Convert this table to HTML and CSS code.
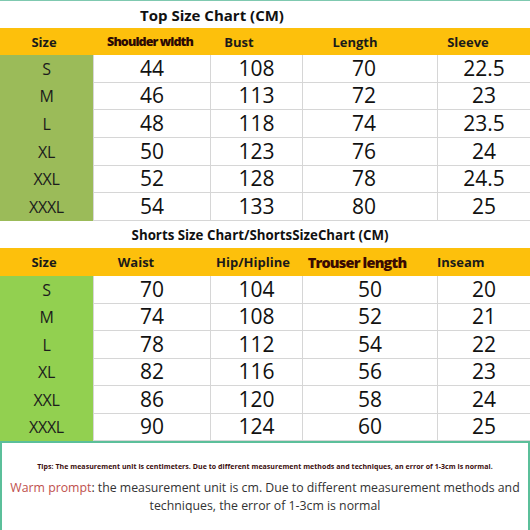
FILE: index.html
```html
<!DOCTYPE html>
<html lang="en">
  <head>
    <meta charset="utf-8">
    <title>Size Chart</title>
    <link rel="stylesheet" href="styles.css">
  </head>
  <body>
    <div class="sheet">
      <h2 class="chart-title title-top">Top Size Chart (CM)</h2>
      <div class="head">
        <span class="h-size">Size</span>
        <span class="heavy h-shoulder">Shoulder width</span>
        <span class="h-bust">Bust</span>
        <span class="h-length">Length</span>
        <span class="h-sleeve">Sleeve</span>
      </div>
      <div class="grid top">
        <span class="size">S</span><span class="num">44</span><span class="num">108</span><span class="num">70</span><span class="num">22.5</span>
        <span class="size">M</span><span class="num">46</span><span class="num">113</span><span class="num">72</span><span class="num">23</span>
        <span class="size">L</span><span class="num">48</span><span class="num">118</span><span class="num">74</span><span class="num">23.5</span>
        <span class="size">XL</span><span class="num">50</span><span class="num">123</span><span class="num">76</span><span class="num">24</span>
        <span class="size">XXL</span><span class="num">52</span><span class="num">128</span><span class="num">78</span><span class="num">24.5</span>
        <span class="size">XXXL</span><span class="num">54</span><span class="num">133</span><span class="num">80</span><span class="num">25</span>
      </div>

      <h2 class="chart-title title-shorts">Shorts Size Chart/ShortsSizeChart (CM)</h2>
      <div class="head head-shorts">
        <span class="h-size">Size</span>
        <span class="h-waist">Waist</span>
        <span class="h-hip">Hip/Hipline</span>
        <span class="heavy h-trouser">Trouser length</span>
        <span class="h-inseam">Inseam</span>
      </div>
      <div class="grid shorts">
        <span class="size">S</span><span class="num">70</span><span class="num">104</span><span class="num">50</span><span class="num">20</span>
        <span class="size">M</span><span class="num">74</span><span class="num">108</span><span class="num">52</span><span class="num">21</span>
        <span class="size">L</span><span class="num">78</span><span class="num">112</span><span class="num">54</span><span class="num">22</span>
        <span class="size">XL</span><span class="num">82</span><span class="num">116</span><span class="num">56</span><span class="num">23</span>
        <span class="size">XXL</span><span class="num">86</span><span class="num">120</span><span class="num">58</span><span class="num">24</span>
        <span class="size">XXXL</span><span class="num">90</span><span class="num">124</span><span class="num">60</span><span class="num">25</span>
      </div>

      <div class="note">
        <p class="tips">Tips: The measurement unit is centimeters. Due to different measurement methods and techniques, an error of 1-3cm is normal.</p>
        <p class="warm"><span class="warm-label">Warm prompt</span>: the measurement unit is cm. Due to different measurement methods and techniques, the error of 1-3cm is normal</p>
      </div>
    </div>
  </body>
</html>
```

FILE: styles.css
```css
body {
  margin: 0;
  background: #fff;
  font-family: "Open Sans", "Liberation Sans", sans-serif;
  color: #141414;
}

.sheet {
  width: 530px;
  height: 530px;
  box-sizing: border-box;
  border-top: 1px solid #7fc9b0;
  display: flex;
  flex-direction: column;
}

.chart-title {
  flex-shrink: 0;
  margin: 0;
  height: 27px;
  display: flex;
  align-items: center;
  justify-content: center;
  font-size: 15px;
  font-weight: 700;
  color: #111;
}
.title-top { padding-right: 106px; }
.title-shorts { font-size: 13.3px; padding-right: 10px; }

.head {
  flex-shrink: 0;
  display: grid;
  grid-template-columns: 93px 117px 92px 135px 1fr;
  height: 27px;
  align-items: center;
  background: #fdc00c;
  font-size: 13px;
  font-weight: 700;
  color: #1a1a1a;
}
.head span { text-align: center; }
.head-shorts { height: 28px; }

.heavy {
  font-size: 12.5px;
  font-weight: 800;
  letter-spacing: -0.9px;
  color: #2c0904;
}
.heavy.h-trouser {
  font-size: 14.5px;
  letter-spacing: -0.8px;
  color: #3a0a02;
}

.h-size { padding-right: 5px; }
.h-shoulder { padding-right: 3px; }
.h-bust { padding-right: 34px; }
.h-length { padding-right: 29px; }
.h-sleeve { padding-right: 31px; }
.h-waist { padding-right: 31px; }
.h-hip { padding-right: 6px; }
.h-trouser { padding-right: 25px; }
.h-inseam { padding-right: 47px; }

.grid {
  flex-shrink: 0;
  display: grid;
  grid-template-columns: 93px 117px 92px 135px 1fr;
  grid-template-rows: repeat(6, minmax(0, 1fr));
  line-height: 1;
}
.grid.top { height: 166px; }
.grid.shorts { height: 165px; }

.grid span {
  display: flex;
  align-items: center;
  justify-content: center;
}

.size {
  font-size: 16px;
  color: #1c1c1c;
  letter-spacing: -0.3px;
}
.top .size { background: #9bbb59; }
.shorts .size { background: #92d050; }

.num {
  font-size: 21px;
  color: #111;
  border-left: 1px solid #d6d6d6;
  border-bottom: 1px solid #d6d6d6;
}
.top .num:nth-child(5n+4) { padding-right: 12px; }

.note {
  flex: 1;
  border: 2px solid #5bbf9a;
  border-bottom: none;
  text-align: center;
  padding-top: 19px;
}
.tips {
  margin: 0 0 8px;
  font-size: 7px;
  font-weight: 700;
  color: #3a0c0c;
  letter-spacing: 0.05px;
}
.warm {
  margin: 0 auto;
  width: 510px;
  font-size: 12.3px;
  line-height: 18px;
  color: #333;
}
.warm-label { color: #c0504d; }
```
